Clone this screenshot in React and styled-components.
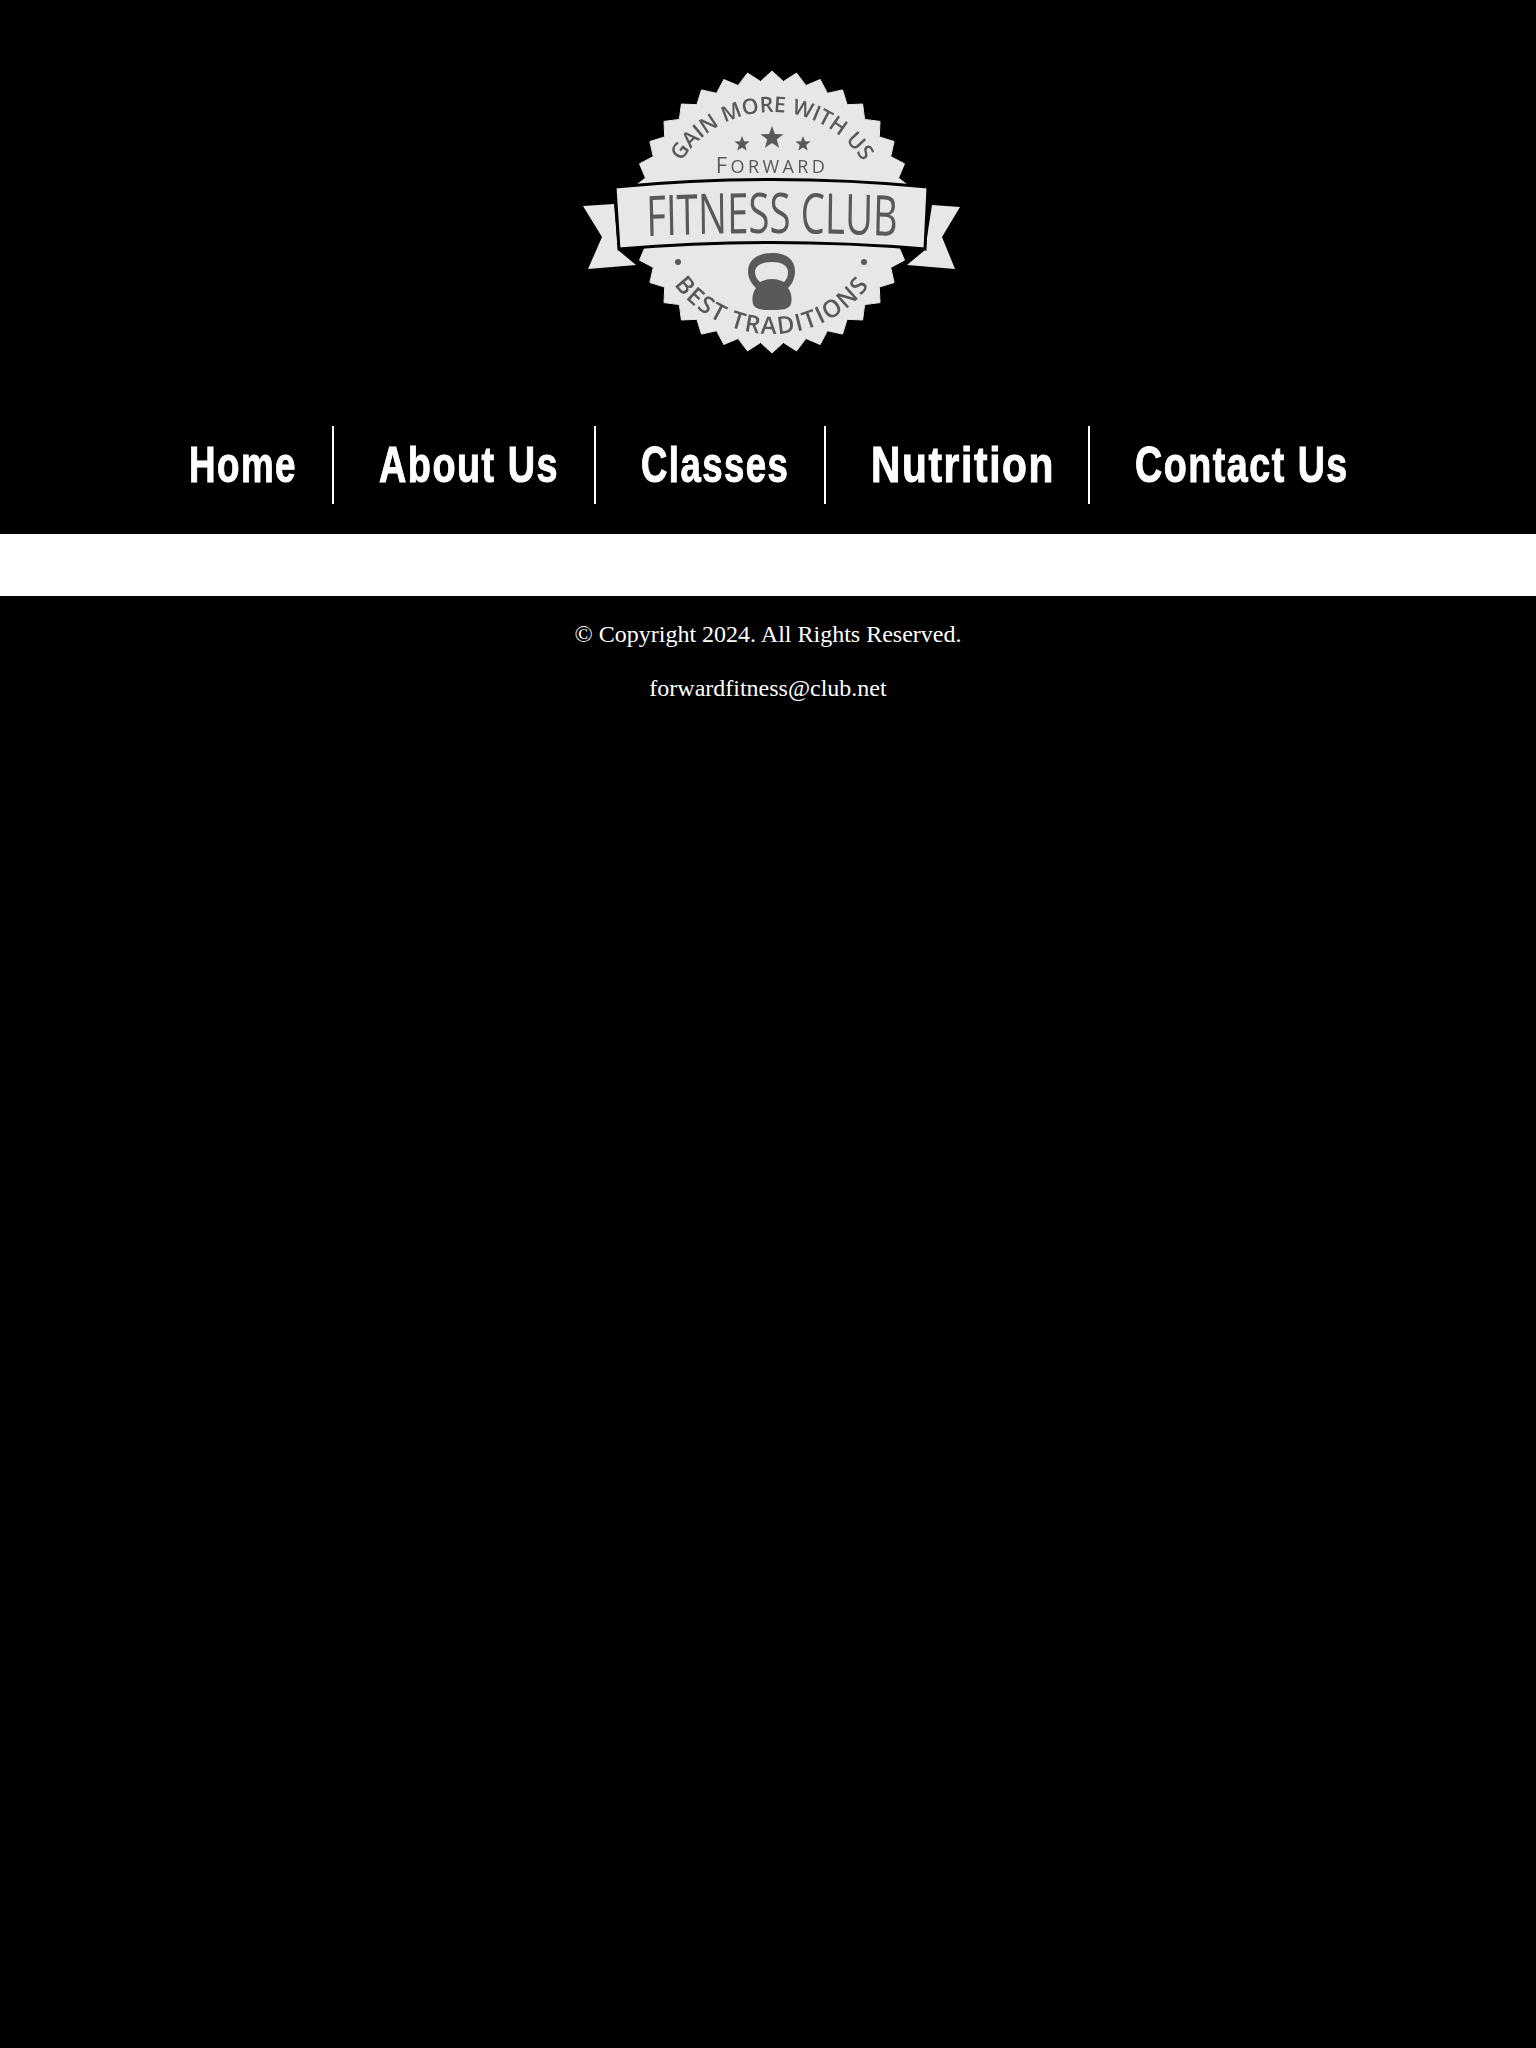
import React from 'react';
import styled, { createGlobalStyle } from 'styled-components';

const GlobalStyle = createGlobalStyle`
    html, body {
        margin: 0;
        padding: 0;
        background: #000;
    }
`;

// no condensed gothic on the box, so each label is squeezed to its width
const links = [
    { label: 'Home', width: 190, squeeze: 0.735 },
    { label: 'About Us', width: 262, squeeze: 0.756 },
    { label: 'Classes', width: 230, squeeze: 0.73 },
    { label: 'Nutrition', width: 264, squeeze: 0.813 },
    { label: 'Contact Us', width: 295, squeeze: 0.753 },
];

// saw edge of the seal, teeth all the way round
const sealPoints = () => {
    const teeth = 36;
    const points = [];
    for (let i = 0; i < teeth * 2; i++) {
        const r = i % 2 === 0 ? 141 : 131;
        const a = (Math.PI * i) / teeth - Math.PI / 2;
        points.push(`${(212 + r * Math.cos(a)).toFixed(1)},${(162 + r * Math.sin(a)).toFixed(1)}`);
    }
    return points.join(' ');
};

const starPoints = (cx, cy, r) => {
    const points = [];
    for (let i = 0; i < 10; i++) {
        const radius = i % 2 === 0 ? r : r * 0.42;
        const a = (Math.PI * i) / 5 - Math.PI / 2;
        points.push(`${(cx + radius * Math.cos(a)).toFixed(1)},${(cy + radius * Math.sin(a)).toFixed(1)}`);
    }
    return points.join(' ');
};

const Logo = () => (
    <LogoSvg viewBox="-2 0 420 320" role="img" aria-label="Forward Fitness Club">
        <defs>
            <path id="arcTop" d="M 104 170 A 108 108 0 1 1 320 170" />
            <path id="arcBottom" d="M 90 162 A 122 122 0 0 0 334 162" />
            <path id="arcBanner" d="M 12 187 Q 212 179 412 187" />
        </defs>
        <polygon points={sealPoints()} fill="#e6e7e8" stroke="#e6e7e8" strokeWidth="1" strokeLinejoin="round" />
        <polygon points="23,156 54,154 58,200 76,215 28,219 42,187" fill="#e6e7e8" />
        <polygon points="372,155 400,157 382,187 395,219 347,215 365,200" fill="#e6e7e8" />
        <path
            d="M 55 137 Q 212 122 368 137 L 365 199 Q 212 186 59 199 Z"
            fill="#e6e7e8"
            stroke="#000"
            strokeWidth="3"
        />
        <LogoText fontSize="21.5" fontWeight="600">
            <textPath href="#arcTop" startOffset="50%" textAnchor="middle">GAIN MORE WITH US</textPath>
        </LogoText>
        <LogoText fontSize="24" fontWeight="600" letterSpacing="1.6">
            <textPath href="#arcBottom" startOffset="50%" textAnchor="middle">BEST TRADITIONS</textPath>
        </LogoText>
        <polygon points={starPoints(212, 88, 12)} fill="#58595b" />
        <polygon points={starPoints(182, 94, 8)} fill="#58595b" />
        <polygon points={starPoints(243, 94, 8)} fill="#58595b" />
        <LogoText x="212" y="123" fontSize="22" letterSpacing="3.4" textAnchor="middle">
            F<tspan fontSize="18">ORWARD</tspan>
        </LogoText>
        <g transform="translate(212 0) scale(0.685 1) translate(-212 0)">
            <LogoText fontSize="56">
                <textPath href="#arcBanner" startOffset="50%" textAnchor="middle">FITNESS CLUB</textPath>
            </LogoText>
        </g>
        <circle cx="118" cy="212" r="3" fill="#58595b" />
        <circle cx="304" cy="212" r="3" fill="#58595b" />
        <path
            fillRule="evenodd"
            fill="#58595b"
            d="M 212 203 C 196 203 188 211 188 221 C 188 229 192 234 196 238 C 192 243 192 250 193 254 C 195 259 200 260 212 260 C 224 260 229 259 231 254 C 232 250 232 243 228 238 C 232 234 235 229 235 221 C 235 211 228 203 212 203 Z M 212 212 C 221 212 228 215 228 222 C 228 227 226 230 224 232 C 220 230 216 229 212 229 C 208 229 204 230 200 232 C 198 230 195 227 195 222 C 195 215 203 212 212 212 Z"
        />
    </LogoSvg>
);

const App = () => (
    <>
        <GlobalStyle />
        <Header>
            <Logo />
            <Nav>
                {links.map((link) => (
                    <NavLink key={link.label} href="#" $width={link.width}>
                        <NavLabel $squeeze={link.squeeze}>{link.label}</NavLabel>
                    </NavLink>
                ))}
            </Nav>
        </Header>
        <Main />
        <Footer>
            <FooterLine>© Copyright 2024. All Rights Reserved.</FooterLine>
            <FooterLine>forwardfitness@club.net</FooterLine>
        </Footer>
    </>
);

const Header = styled.header`
    background: #000;
    padding: 50px 0 30px;
`;
const LogoSvg = styled.svg`
    display: block;
    width: 420px;
    height: 320px;
    margin: 0 auto 56px;
    filter: blur(0.5px);
`;
const LogoText = styled.text`
    font-family: "Open Sans", "Liberation Sans", sans-serif;
    fill: #58595b;
`;
const Nav = styled.nav`
    display: flex;
    justify-content: center;
    padding-right: 7px;
`;
const NavLink = styled.a`
    box-sizing: border-box;
    display: flex;
    align-items: center;
    flex: none;
    width: ${(props) => props.$width}px;
    height: 78px;
    padding-left: 45px;
    border-right: 2px solid #fff;
    color: #fff;
    font-family: "Liberation Sans", Arial, sans-serif;
    font-size: 50px;
    font-weight: 700;
    letter-spacing: 2px;
    text-decoration: none;
    white-space: nowrap;
    &:last-child {
        border-right: none;
    }
`;
const NavLabel = styled.span`
    display: inline-block;
    transform: scaleX(${(props) => props.$squeeze});
    transform-origin: left center;
    -webkit-text-stroke: 1px #fff;
`;
const Main = styled.main`
    height: 62px;
    background: #fff;
`;
const Footer = styled.footer`
    background: #000;
    min-height: 1452px;
    padding-top: 25px;
    color: #fff;
    font-family: "Liberation Serif", "Times New Roman", serif;
    font-size: 24px;
    text-align: center;
`;
const FooterLine = styled.p`
    margin: 0 0 27px;
`;

export default App;
